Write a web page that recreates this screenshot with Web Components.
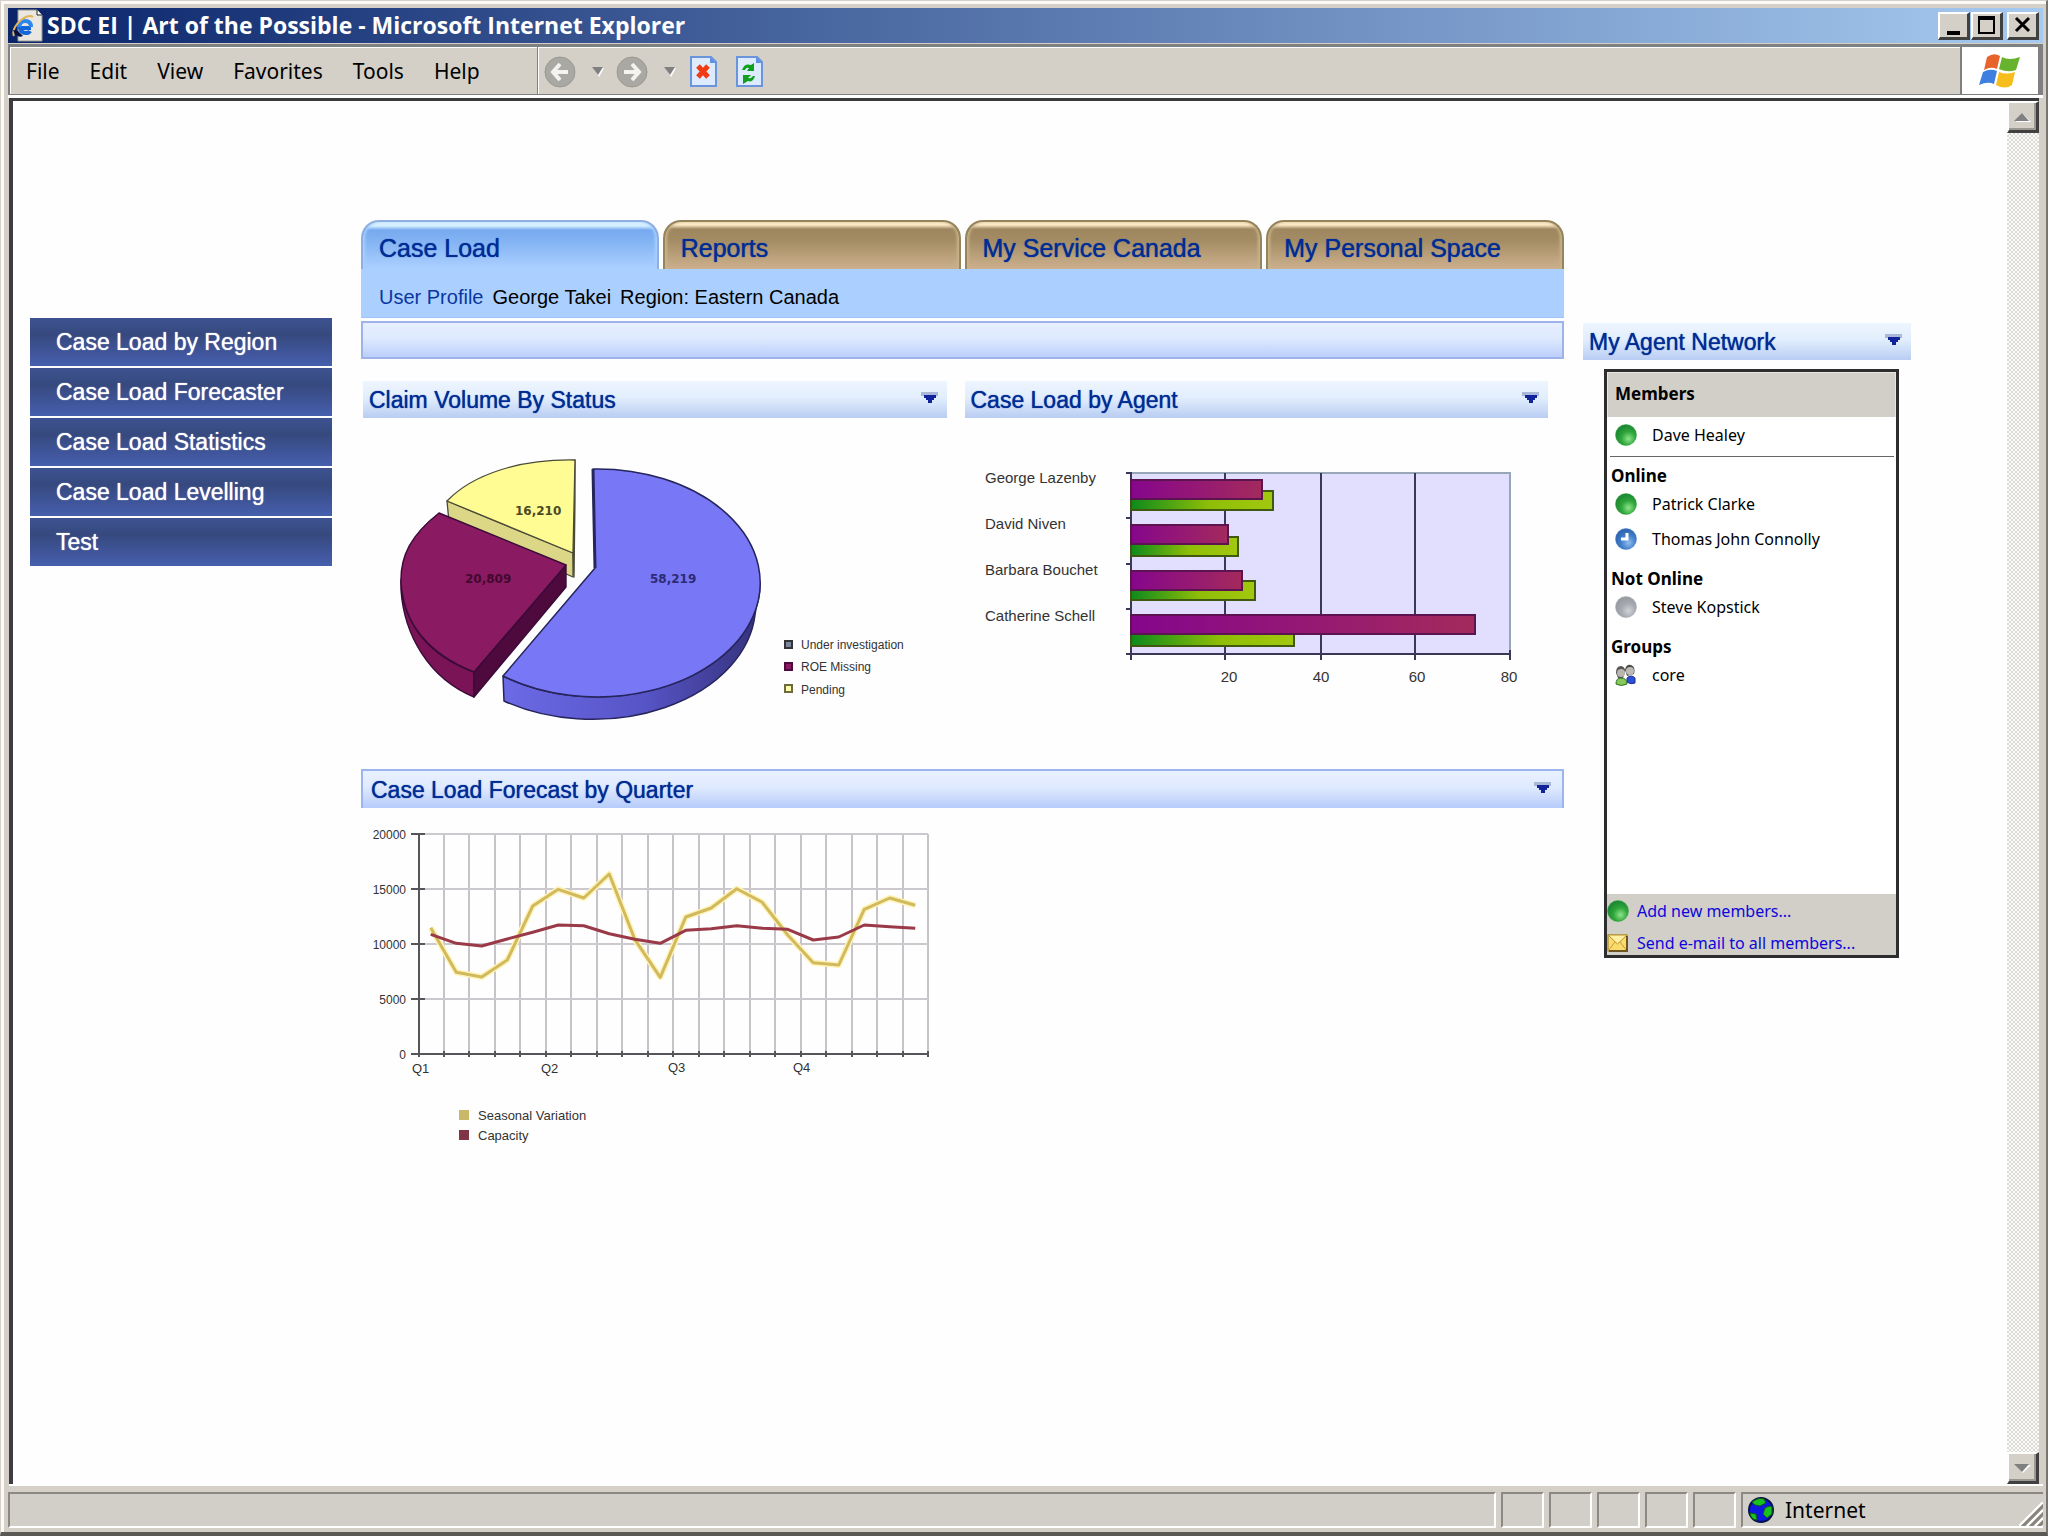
<!DOCTYPE html>
<html lang="en">
<head>
<meta charset="utf-8">
<title>SDC EI | Art of the Possible - Microsoft Internet Explorer</title>
<style>
  html, body { margin: 0; height: 100%; }
  body { font-family: "Liberation Sans", Arial, sans-serif; color: #000; background: #d4d0c8; }
  claim-pie, agent-bars, forecast-lines { display: block; }
</style>
</head>
<body>
<browser-window heading="SDC EI | Art of the Possible - Microsoft Internet Explorer">
  <portal-page>
    <side-nav slot="nav"></side-nav>
    <portal-tabs></portal-tabs>
    <panel-pair>
      <portlet-panel heading="Claim Volume By Status"><claim-pie></claim-pie></portlet-panel>
      <portlet-panel heading="Case Load by Agent"><agent-bars></agent-bars></portlet-panel>
    </panel-pair>
    <portlet-panel framed heading="Case Load Forecast by Quarter"><forecast-lines></forecast-lines></portlet-panel>
    <portlet-panel slot="aside" heading="My Agent Network"><agent-network></agent-network></portlet-panel>
  </portal-page>
</browser-window>

<script>
const define = (name, markup) => customElements.define(name, class extends HTMLElement {
  connectedCallback() {
    if (this.shadowRoot) return;
    const root = this.attachShadow({ mode: 'open' });
    root.innerHTML = typeof markup === 'function' ? markup(this) : markup;
  }
});
const UI_FONT = '"Noto Sans", "DejaVu Sans", sans-serif';

/* ---------- page content ---------- */
define('side-nav', `
<style>
  :host { display: block; }
  nav { display: flex; flex-direction: column; gap: 2px; }
  a { display: block; height: 48px; padding-left: 26px; font-size: 23px; line-height: 48px;
      color: #fff; text-decoration: none; white-space: nowrap; text-shadow: 0 0 1px #fff;
      background: linear-gradient(#3d5290, #36497f 35%, #4258a0 80%, #4660ae); }
</style>
<nav>
  <a href="#region">Case Load by Region</a>
  <a href="#forecaster">Case Load Forecaster</a>
  <a href="#statistics">Case Load Statistics</a>
  <a href="#levelling">Case Load Levelling</a>
  <a href="#test">Test</a>
</nav>`);

define('portal-tabs', `
<style>
  :host { display: block; }
  nav { display: flex; gap: 4px; }
  a { flex: 1; box-sizing: border-box; height: 49px; padding-left: 16px; font-size: 25px; line-height: 53px;
      color: #002c94; text-decoration: none; text-shadow: 0 0 1px #002c94; white-space: nowrap; border: 2px solid #95845c; border-bottom: 0;
      border-radius: 18px 18px 0 0;
      background: linear-gradient(#fbe9c6, #fbe9c6 3px, #9e8760 7px, #a38c63 18px, #cdb08e);
      box-shadow: inset 3px 0 3px -1px #c9b48a, inset -3px 0 3px -1px #c9b48a; }
  a.on { border-color: #8fafe3; border-bottom: 0; background: linear-gradient(#d8f2ff, #d3eeff 4px, #76a9ef 8px, #84b4f3 20px, #acd0ff);
      box-shadow: inset 3px 0 3px -1px #a8d0ff, inset -3px 0 3px -1px #a8d0ff; }
  .info { box-sizing: border-box; height: 49px; padding: 5px 18px 0; background: #abd0ff; border-bottom: 1px solid #9fc2f8;
      font-size: 20px; line-height: 46px; display: flex; gap: 9px; white-space: nowrap; }
  .info span:first-child { color: #0a36a0; }
  .bar { box-sizing: border-box; height: 38px; margin-top: 3px; border: 2px solid #9db3ea;
      background: linear-gradient(#e6eeff, #deeafe 45%, #bccffb); }
</style>
<nav>
  <a class="on" href="#case">Case Load</a><a href="#reports">Reports</a>
  <a href="#service">My Service Canada</a><a href="#personal">My Personal Space</a>
</nav>
<div class="info"><span>User Profile</span><span>George Takei</span><span>Region: Eastern Canada</span></div>
<div class="bar"></div>`);

define('portlet-panel', el => `
<style>
  :host { display: block; }
  header { box-sizing: border-box; display: flex; align-items: center; justify-content: space-between;
      height: 37px; padding: 0 8px 0 6px; background: linear-gradient(#edf5fe, #e2eefd 45%, #b9cdf3); }
  h2 { margin: 2px 0 0; font-size: 23px; line-height: 37px; font-weight: 400; color: #002c94; text-shadow: 0 0 1px #002c94; white-space: nowrap; }
  button { all: unset; width: 18px; height: 12px; margin-bottom: 4px; }
  svg { display: block; }
  :host([framed]) header { height: 39px; padding: 0 10px 0 8px; border: solid #9bb6ee; border-width: 2px 2px 0;
      background: linear-gradient(#e8f1ff, #dfeaff 45%, #b6cbfa); }
</style>
<header><h2>${el.getAttribute('heading')}</h2>
<button aria-label="Collapse"><svg width="18" height="12" viewBox="0 0 18 12"><path d="M0 0H17V4H0Z" fill="#a9b8d8"/><path d="M3 3H15V6H13V8H11V11H7V8H5V6H3Z" fill="#10239b"/></svg></button></header>
<slot></slot>`);

define('panel-pair', `
<style>
  :host { display: grid; grid-template-columns: 1fr 1fr; gap: 18px; padding: 22px 16px 26px 2px; }
</style><slot></slot>`);

define('portal-page', `
<style>
  :host { display: grid; grid-template-columns: 302px minmax(0, 1fr) 328px; align-items: start;
      padding: 119px 96px 0 17px; box-sizing: border-box; }
  .nav { margin-top: 98px; }
  main { padding: 0 19px 0 29px; }
  aside { margin-top: 103px; }
</style>
<div class="nav"><slot name="nav"></slot></div>
<main><slot></slot></main>
<aside><slot name="aside"></slot></aside>`);

/* ---------- charts ---------- */
const chartStyle = `<style>
  :host { display: block; } svg { display: block; max-width: 100%; }
  text { font-family: "Liberation Sans", Arial, sans-serif; fill: #333; }
  .crisp { shape-rendering: crispEdges; }
</style>`;

define('claim-pie', chartStyle + `
<svg width="583" height="325" viewBox="363 418 583 325" role="img" aria-label="Claim volume pie chart">
  <defs>
    <linearGradient id="side" x1="0" x2="1"><stop offset="0" stop-color="#6c6ae6"/><stop offset=".55" stop-color="#5754c6"/><stop offset="1" stop-color="#34327c"/></linearGradient>
  </defs>
  <g stroke="#4a4a38" stroke-width="1.3" stroke-linejoin="round">
    <path d="M447 501L573 553V577L449 522Z" fill="#dcd786"/>
    <path d="M573 553L575 460V500L574 577Z" fill="#9a9660"/>
    <path d="M573 553L575 460C520 459 473 474 447 501Z" fill="#fffc93"/>
  </g>
  <g stroke="#3a0a38" stroke-width="1.4" stroke-linejoin="round">
    <path d="M401 580C403 627 432 657 474 672V697C428 678 404 634 401 590Z" fill="#7a1456"/>
    <path d="M566 565V587L474 697V672Z" fill="#4e0a3c"/>
    <path d="M566 565L439 513C411 535 400 556 401 583C404 627 432 655 474 672Z" fill="#8a1b62"/>
  </g>
  <g stroke="#26255c" stroke-width="1.5" stroke-linejoin="round">
    <path d="M503 676L504 701A163 114 0 0 0 755 615L760 583A163 114 0 0 1 503 676Z" fill="url(#side)"/>
    <path d="M595 568L593 469A163 114 0 1 1 503 676Z" fill="#7877f6"/>
    <path d="M595 568L593 469" stroke-width="3"/>
  </g>
  <g style="font-weight:700" font-size="12">
    <text x="515" y="515" style="font-family:'DejaVu Sans';fill:#4b4a22">16,210</text>
    <text x="465" y="583" style="font-family:'DejaVu Sans';fill:#43082f">20,809</text>
    <text x="650" y="583" style="font-family:'DejaVu Sans';fill:#2c2b74">58,219</text>
  </g>
  <g class="crisp" stroke="#333" stroke-width="2">
    <rect x="785" y="641" width="7" height="7" fill="#7d86a0"/>
    <rect x="785" y="663" width="7" height="7" fill="#8a1b62" stroke="#4e0a3c"/>
    <rect x="785" y="685" width="7" height="7" fill="#fffcae" stroke="#6d6a3c"/>
  </g>
  <g font-size="12"><text x="801" y="649">Under investigation</text><text x="801" y="671">ROE Missing</text><text x="801" y="694">Pending</text></g>
</svg>`);

define('agent-bars', () => {
  const agents = [
    ['George Lazenby', 480, 1262, 491, 1273], ['David Niven', 525, 1228, 537, 1238],
    ['Barbara Bouchet', 571, 1242, 581, 1255], ['Catherine Schell', 615, 1475, 627, 1294]];
  const bars = agents.map(([n, py, px, gy, gx]) => `
    <rect x="1131" y="${gy}" width="${gx - 1131}" height="19" fill="url(#g)" stroke="#3f5a10"/>
    <rect x="1131" y="${py}" width="${px - 1131}" height="19" fill="url(#p)" stroke="#5c1450"/>`).join('');
  const names = agents.map(([n], i) => `<text x="985" y="${483 + i * 46}">${n}</text>`).join('');
  const grid = [1225, 1321, 1415].map(x => `<path d="M${x} 473V660"/>`).join('');
  const ticks = [473, 518, 564, 609, 654].map(y => `<path d="M1126 ${y}H1131"/>`).join('');
  const nums = [[1229, 20], [1321, 40], [1417, 60], [1509, 80]].map(([x, n]) => `<text x="${x}" y="682">${n}</text>`).join('');
  return chartStyle + `
<svg width="583" height="325" viewBox="965 418 583 325" role="img" aria-label="Case load by agent bar chart">
  <defs>
    <linearGradient id="g"><stop offset="0" stop-color="#0d8a1c"/><stop offset=".55" stop-color="#8fbe08"/><stop offset="1" stop-color="#a2c80e"/></linearGradient>
    <linearGradient id="p"><stop offset="0" stop-color="#86068c"/><stop offset="1" stop-color="#a32a5c"/></linearGradient>
  </defs>
  <g class="crisp">
    <rect x="1130" y="473" width="380" height="181" fill="#e1dffd"/>
    <path d="M1130 473H1510V654" fill="none" stroke="#97a7b8" stroke-width="2"/>
    <g stroke="#3a3758" stroke-width="2">${grid}${ticks}<path d="M1131 472V660M1130 654H1511M1510 650V660"/></g>
    <g stroke-width="2">${bars}</g>
  </g>
  <g font-size="15">${names}<g text-anchor="middle">${nums}</g></g>
</svg>`;
});

define('forecast-lines', () => {
  const seasonal = [11485, 7424, 7000, 8545, 13455, 14970, 14182, 16364, 10424, 6970, 12455, 13273, 15030, 13788, 10818, 8303, 8091, 13152, 14182, 13515];
  const capacity = [10879, 10061, 9818, 10455, 11061, 11727, 11667, 10939, 10424, 10061, 11242, 11394, 11667, 11424, 11333, 10364, 10636, 11727, 11576, 11424];
  const pts = d => d.map((v, i) => `${418 + 25.5 * (i + .5)},${(1054 - v * .011).toFixed(1)}`).join(' ');
  let v = '', t = '', h = '', l = '';
  for (let i = 1; i <= 20; i++) { const x = Math.round(418 + i * 25.5); v += `M${x} 834V1054`; t += `M${x} 1051V1057`; }
  for (let i = 0; i <= 4; i++) {
    const y = 1054 - i * 55; h += `M418 ${y}H928`; t += `M411 ${y}H425`;
    l += `<text x="406" y="${y + 5}">${i * 5000}</text>`;
  }
  return chartStyle + `
<svg width="600" height="352" viewBox="361 808 600 352" role="img" aria-label="Case load forecast line chart">
  <g class="crisp" fill="none" stroke-width="2">
    <path d="${v}" stroke="#c6c3c9"/><path d="${h}" stroke="#cbc8ce"/>
    <path d="${t}M419 834V1057M412 1054H928" stroke="#57555a"/>
  </g>
  <g fill="none" stroke-linejoin="round">
    <polyline points="${pts(seasonal)}" stroke="#fff3b8" stroke-width="6"/>
    <polyline points="${pts(seasonal)}" stroke="#d1b95e" stroke-width="3"/>
    <polyline points="${pts(capacity)}" stroke="#9a3a48" stroke-width="3"/>
  </g>
  <g font-size="13"><g font-size="12" text-anchor="end">${l}</g>
    <text x="412" y="1073">Q1</text><text x="541" y="1073">Q2</text><text x="668" y="1072">Q3</text><text x="793" y="1072">Q4</text>
    <text x="478" y="1120">Seasonal Variation</text><text x="478" y="1140">Capacity</text>
  </g>
  <g class="crisp"><rect x="459" y="1110" width="10" height="10" fill="#c9b86a"/><rect x="459" y="1130" width="10" height="10" fill="#7f3545"/></g>
</svg>`;
});

/* ---------- agent network ---------- */
define('presence-icon', el => {
  const kind = el.getAttribute('kind');
  const [a, b, c] = { online: ['#8ee58a', '#2fa63c', '#1e8a34'], away: ['#8fbdf0', '#4480cc', '#2f66b0'], offline: ['#d2d3d8', '#a8aab2', '#9a9ca4'] }[kind] || [];
  const ball = `<defs><radialGradient id="r" cx=".62" cy=".68" r=".62"><stop offset="0" stop-color="${a}"/><stop offset=".55" stop-color="${b}"/><stop offset="1" stop-color="${c}"/></radialGradient></defs><circle cx="11" cy="11" r="10.5" fill="url(#r)" stroke="${b}" stroke-opacity=".5"/>`;
  const body = {
    away: ball + '<path d="M6 11H12V5" fill="none" stroke="#fff" stroke-width="3"/>',
    group: `<path d="M1 9Q1 2 6 2Q11 3 10 9L8 14H3Z" fill="#555"/><circle cx="6" cy="9" r="4" fill="#b9b6b0"/><path d="M10 6Q11 0 16 1Q21 3 19 10L12 12Z" fill="#4a4a4a"/><circle cx="15" cy="7" r="4" fill="#bdbab4"/><path d="M12 18V14Q16 10 20 14V19Q16 21 12 18Z" fill="#2c50d8" stroke="#1c2f90"/><path d="M1 20Q1 14 6 14Q12 14 12 20Q6 23 1 20Z" fill="#86c95a" stroke="#2f6d20"/>`,
    mail: `<rect x="1" y="3" width="19" height="16" fill="#f9dc6c" stroke="#8f7428"/><path d="M1 3H20L10.500 12Z" fill="#fff0a2" stroke="#b8912c"/><path d="M1 19L8 10M20 19L13 10" stroke="#c79a36"/><path d="M20 4V19H2" fill="none" stroke="#6c5520" stroke-width="2"/>`
  }[kind] || ball;
  return `<style>:host { display: block; width: 22px; height: 22px; } svg { display: block; }</style><svg width="22" height="22" viewBox="0 0 22 22">${body}</svg>`;
});

define('agent-network', `
<style>
  :host { display: flex; flex-direction: column; box-sizing: border-box; height: 589px; margin: 9px 12px 0 21px;
      border: 3px solid #2d2c2e; background: #fff; font: 16px/22px ${UI_FONT}; white-space: nowrap; }
  h3 { margin: 0; font-size: 17px; line-height: 22px; font-weight: 700; padding-left: 4px; }
  .head { padding: 10px 7px 12px; background: #d1cfc7; border: solid #e8e7e2; border-width: 1px 1px 0; height: 22px; }
  .row { display: flex; align-items: center; gap: 15px; padding-left: 8px; height: 22px; }
  hr { margin: 10px 2px 8px 3px; border: 0; border-top: 1px solid #666; }
  ul, li { margin: 0; padding: 0; list-style: none; }
  ul { display: flex; flex-direction: column; gap: 13px; margin: 6px 0 18px; }
  .me { margin-top: 7px; }
  footer { margin-top: auto; background: #d1cfc7; height: 61px; box-sizing: border-box; padding-top: 6px; display: flex; flex-direction: column; gap: 10px; }
  footer a { display: flex; align-items: center; gap: 8px; height: 22px; color: #0e06dc; text-decoration: none; }
</style>
<h3 class="head">Members</h3>
<div class="row me"><presence-icon kind="online"></presence-icon><span>Dave Healey</span></div>
<hr>
<h3>Online</h3>
<ul>
  <li class="row"><presence-icon kind="online"></presence-icon><span>Patrick Clarke</span></li>
  <li class="row"><presence-icon kind="away"></presence-icon><span>Thomas John Connolly</span></li>
</ul>
<h3>Not Online</h3>
<ul><li class="row"><presence-icon kind="offline"></presence-icon><span>Steve Kopstick</span></li></ul>
<h3>Groups</h3>
<ul><li class="row"><presence-icon kind="group"></presence-icon><span>core</span></li></ul>
<footer>
  <a href="#add"><presence-icon kind="online"></presence-icon><span>Add new members...</span></a>
  <a href="#mail"><presence-icon kind="mail"></presence-icon><span>Send e-mail to all members...</span></a>
</footer>`);

/* ---------- browser chrome ---------- */
define('window-title', el => `
<style>
  :host { display: flex; align-items: center; height: 35px; padding: 0 4px 0 4px; color: #fff;
      background: linear-gradient(90deg, #0a246a, #a6caf0); font: 700 23px/35px "Open Sans", "Noto Sans", sans-serif; white-space: nowrap; }
  svg { display: block; }
  .name { flex: 1; margin-left: 4px; }
  button { all: unset; box-sizing: border-box; width: 32px; height: 28px; background: #d4d0c8; border: 2px solid;
      border-color: #fff #404040 #404040 #fff; border-right-width: 3px; border-bottom-width: 3px; }
  button + button { margin-left: 1px; }
  button:last-child { margin-left: 4px; }
</style>
<svg width="31" height="33" viewBox="0 0 31 33"><path d="M6 1H25L30 6V32H6Z" fill="#e9e7df" stroke="#9a988e"/><path d="M25 1V6H30" fill="#fff" stroke="#222"/>
  <path d="M19 19H8Q9 24 14 24Q17 24 18 22" fill="none" stroke="#1467d8" stroke-width="4"/><path d="M7 18Q8 12 13 12Q19 12 19 18" fill="none" stroke="#2b86ee" stroke-width="4"/>
  <path d="M2 27Q-1 20 9 11Q17 5 21 8" fill="none" stroke="#e0b458" stroke-width="2"/><path d="M1 21Q5 30 11 27L6 22Z" fill="#08123f"/></svg>
<span class="name">${el.getAttribute('heading')}</span>
<button aria-label="Minimize"><svg width="27" height="23"><path d="M7 17H20V21H7Z"/></svg></button>
<button aria-label="Maximize"><svg width="27" height="23"><path d="M5 2H22V20H5ZM7 6V18H20V6Z" fill-rule="evenodd"/></svg></button>
<button aria-label="Close"><svg width="27" height="23"><path d="M7 4L20 17M20 4L7 17" stroke="#000" stroke-width="3"/></svg></button>`);

define('menu-bar', `
<style>
  :host { display: flex; align-items: stretch; box-sizing: border-box; height: 51px; margin: 1px 0 0; border: solid #808080; border-width: 3px 5px 1px 2px;
      background: #d4d0c8; box-shadow: inset 1px 1px #fff; font: 21px/48px ${UI_FONT}; }
  nav { display: flex; gap: 30px; width: 511px; padding-left: 16px; box-sizing: content-box; border-right: 1px solid #808080; box-shadow: 1px 0 #fff; }
  button { all: unset; white-space: nowrap; }
  .tools { flex: 1; display: flex; align-items: center; padding: 2px 0 0 6px; }
  .tools button { margin-right: 16px; } .tools .page { margin-left: -2px; margin-right: 21px; }
  svg { display: block; }
  .brand { width: 76px; border-left: 2px solid #808080; background: #fff; display: grid; place-items: center; }
</style>
<nav><button>File</button><button>Edit</button><button>View</button><button>Favorites</button><button>Tools</button><button>Help</button></nav>
<div class="tools">
  <button aria-label="Back"><svg width="32" height="32"><circle cx="16" cy="16" r="15" fill="#aaa8a2" stroke="#9a9892"/><path d="M16 8L9 16L16 24M10 16H24" fill="none" stroke="#f4f3f0" stroke-width="4"/></svg></button>
  <button aria-label="Back history"><svg width="12" height="10"><path d="M1 1H12L7 10Z" fill="#fff"/><path d="M0 0H11L6 8Z" fill="#808080"/></svg></button>
  <button aria-label="Forward" style="margin-left:-4px"><svg width="32" height="32"><circle cx="16" cy="16" r="15" fill="#aaa8a2" stroke="#9a9892"/><path d="M16 8L23 16L16 24M22 16H8" fill="none" stroke="#f4f3f0" stroke-width="4"/></svg></button>
  <button aria-label="Forward history"><svg width="12" height="10"><path d="M1 1H12L7 10Z" fill="#fff"/><path d="M0 0H11L6 8Z" fill="#808080"/></svg></button>
  <button class="page" aria-label="Stop"><svg width="27" height="31"><path d="M1 1H21L26 6V30H1Z" fill="#dcebfd" stroke="#6a94dc" stroke-width="2"/><path d="M20 1V7H26Z" fill="#5f8fe0"/><path d="M8 10L18 21M18 10L8 21" stroke="#f03c14" stroke-width="5"/></svg></button>
  <button class="page" aria-label="Refresh"><svg width="27" height="31"><path d="M1 1H21L26 6V30H1Z" fill="#dcebfd" stroke="#6a94dc" stroke-width="2"/><path d="M20 1V7H26Z" fill="#5f8fe0"/><path d="M7 12Q9 7 15 9L18 7V15H11L13 12Q10 11 9 14H6ZM19 20Q17 27 12 25L7 28V19H15L12 22Q15 23 17 20Z" fill="#0fa01c"/></svg></button>
</div>
<div class="brand"><svg width="42" height="38" viewBox="0 0 42 38">
  <path d="M8 5Q15 0 21 4L18 17Q12 14 5 18Z" fill="#e8622c"/><path d="M23 5Q30 9 41 5L37 18Q29 21 20 17Z" fill="#67b32e"/>
  <path d="M4 20Q11 16 18 19L15 32Q9 29 0 33Z" fill="#3f7fe0"/><path d="M20 20Q27 23 36 20L33 33Q26 38 17 33Z" fill="#f6bd1c"/></svg></div>`);

define('scroll-track', `
<style>
  :host { display: flex; flex-direction: column; justify-content: space-between; width: 32px;
      background: repeating-conic-gradient(#dcdad4 0 25%, #fbfbfa 0 50%) 0 0 / 4px 4px; }
  button { all: unset; box-sizing: border-box; height: 32px; background: #d4d0c8; border: solid; border-width: 2px 3px 3px 2px;
      border-color: #fff #404040 #404040 #fff; display: grid; place-items: center; box-shadow: inset -2px -2px #9a9890; }
</style>
<button aria-label="Scroll up"><svg width="17" height="10"><path d="M2 10H17L9 2Z" fill="#fff"/><path d="M0 9H15L8 1Z" fill="#808080"/></svg></button>
<button aria-label="Scroll down"><svg width="17" height="10"><path d="M2 2H17L9 10Z" fill="#fff"/><path d="M0 1H15L8 9Z" fill="#808080"/></svg></button>`);

define('status-bar', `
<style>
  :host { display: flex; gap: 5px; height: 36px; margin-top: 6px; font: 21px/32px ${UI_FONT}; }
  div { box-sizing: border-box; width: 43px; border: 2px solid; border-color: #8b8982 #fff #fff #8b8982; background: #d1cfc7; }
  .main { flex: 1; }
  .zone { width: 302px; border-right: 0; display: flex; align-items: center; gap: 11px; padding-left: 5px; }
  .zone span { flex: 1; }
  svg { display: block; }
  .grip { align-self: flex-end; }
</style>
<div class="main"></div><div></div><div></div><div></div><div></div><div></div>
<div class="zone"><svg width="26" height="26"><circle cx="13" cy="13" r="12" fill="#1018e0" stroke="#06104a" stroke-width="2"/><path d="M4 5Q10 0 16 2L18 6L12 9L7 8ZM17 11Q22 8 24 10V17L19 21L15 17ZM2 16L8 17L9 23Q3 23 2 16Z" fill="#18c020" stroke="#0a5a14"/></svg>
<span>Internet</span>
<svg class="grip" width="24" height="24"><g stroke="#fff" stroke-width="2"><path d="M0 24L24 0M8 24L24 8M16 24L24 16"/></g><g stroke="#86847c" stroke-width="3"><path d="M3 25L25 3M11 25L25 11M19 25L25 19"/></g></svg></div>`);

define('browser-window', el => `
<style>
  :host { display: flex; flex-direction: column; box-sizing: border-box; height: 100vh; background: #d4d0c8;
      border: solid; border-width: 1px 2px 4px 1px; border-color: #d4d0c8 #77756f #5b5954 #d4d0c8;
      padding: 7px 3px 4px 7px; box-shadow: inset 3px 3px #fbfaf6; }
  .view { flex: 1; min-height: 0; display: flex; margin: 1px 4px 0 1px; border: solid #3a3a3c; border-width: 3px 0 0 4px; border-left-color: #3d3c42; background: #fefefe; }
  .line { height: 3px; margin-bottom: -1px; background: #fff; }
  .page { flex: 1; overflow: hidden; }
  .edge { height: 2px; background: #fff; margin: 0 0 0 1px; }
</style>
<window-title heading="${el.getAttribute('heading')}"></window-title>
<menu-bar></menu-bar>
<div class="line"></div>
<div class="view"><div class="page"><slot></slot></div><scroll-track></scroll-track></div>
<div class="edge"></div>
<status-bar></status-bar>`);
</script>
</body>
</html>
